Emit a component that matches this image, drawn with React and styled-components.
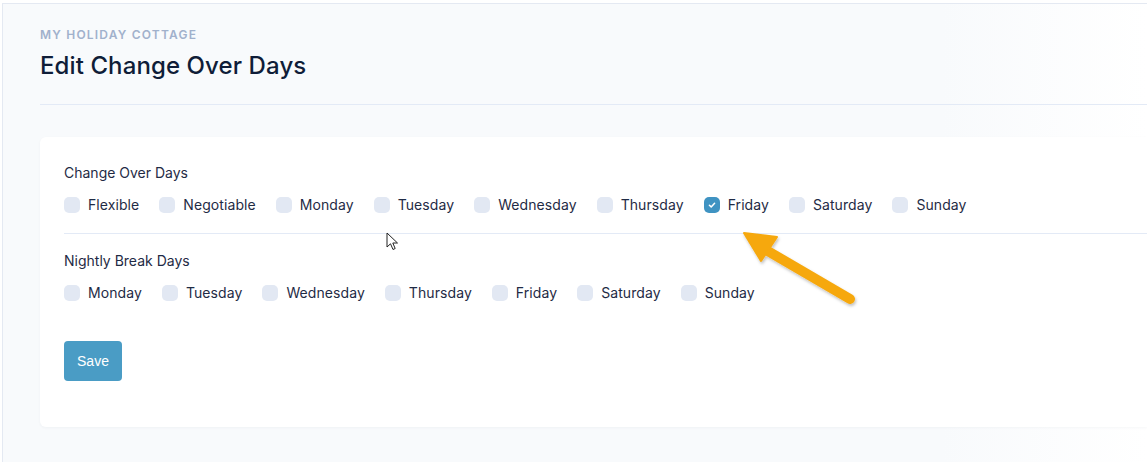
import React, { useState } from 'react';
import styled, { createGlobalStyle } from 'styled-components';

const GlobalStyle = createGlobalStyle`
  body {
    margin: 0;
    background: #fff;
    font-family: Inter, "Noto Sans", sans-serif;
    overflow: hidden;
  }
`;

// outer frame of the page
const Page = styled.div`
  position: relative;
  margin: 3px 0 0 2px;
  height: 459px;
  box-sizing: border-box;
  border-top: 1px solid #e4e9f2;
  border-left: 1px solid #e4e9f2;
  padding: 23px 0 0 37px;
  background: linear-gradient(to right, #f8fafc 0%, #f8fafc 82%, #ffffff 100%);
`;

const Kicker = styled.div`
  font-size: 12px;
  line-height: 16px;
  font-weight: 600;
  letter-spacing: 1.2px;
  color: #a1b1cc;
  text-transform: uppercase;
`;

const Title = styled.h1`
  margin: 8px 0 0;
  font-size: 24px;
  line-height: 30px;
  font-weight: 500;
  letter-spacing: 0.1px;
  color: #0f1d38;
`;

const Rule = styled.div`
  height: 1px;
  background: #e3eaf6;
  margin-top: ${p => p.$top || 0}px;
`;

const Card = styled.div`
  margin-top: 32px;
  background: #fff;
  border-radius: 6px 0 0 6px;
  box-shadow: 0 1px 3px rgba(30, 45, 80, 0.04);
  padding: 26px 0 46px 24px;
`;

const Label = styled.div`
  font-size: 14px;
  line-height: 20px;
  color: #1f2b45;
  margin-top: ${p => p.$top || 0}px;
`;

const Options = styled.div`
  display: flex;
  gap: 20px;
  margin-top: 12px;
`;

const Option = styled.label`
  display: flex;
  align-items: center;
  gap: 8px;
  font-size: 14px;
  line-height: 20px;
  color: #1f2b45;
  letter-spacing: 0.08px;
  cursor: pointer;
`;

const Box = styled.span`
  width: 16px;
  height: 16px;
  border-radius: 5px;
  background: ${p => (p.$on ? '#3f93c2' : '#e2e8f3')};
  display: flex;
  align-items: center;
  justify-content: center;
`;

const SaveButton = styled.button`
  margin-top: 38px;
  width: 58px;
  height: 40px;
  border: none;
  border-radius: 4px;
  background: #4a9cc5;
  color: #fff;
  font-family: "Liberation Sans", Arial, sans-serif;
  font-size: 14px;
  font-weight: 400;
  cursor: pointer;
`;

const Overlay = styled.svg`
  position: absolute;
  pointer-events: none;
`;

const changeDays = ['Flexible', 'Negotiable', 'Monday', 'Tuesday', 'Wednesday', 'Thursday', 'Friday', 'Saturday', 'Sunday'];
const nightDays = ['Monday', 'Tuesday', 'Wednesday', 'Thursday', 'Friday', 'Saturday', 'Sunday'];

function Check({ label, on, onToggle }) {
  return (
    <Option onClick={onToggle}>
      <Box $on={on}>
        {on && (
          <svg width="8" height="8" viewBox="0 0 8 8">
            <path d="M1.4 4.2 L3.2 5.9 L6.6 2.2" fill="none" stroke="#fff" strokeWidth="1.5" strokeLinecap="round" strokeLinejoin="round" />
          </svg>
        )}
      </Box>
      {label}
    </Option>
  );
}

export default function App() {
  const [change, setChange] = useState({ Friday: true });
  const [night, setNight] = useState({});

  return (
    <>
      <GlobalStyle />
      <Page>
        <Kicker>My Holiday Cottage</Kicker>
        <Title>Edit Change Over Days</Title>
        <Rule $top={23} />
        <Card>
          <Label>Change Over Days</Label>
          <Options>
            {changeDays.map(d => (
              <Check key={d} label={d} on={!!change[d]} onToggle={() => setChange({ ...change, [d]: !change[d] })} />
            ))}
          </Options>
          <Rule $top={18} />
          <Label $top={17}>Nightly Break Days</Label>
          <Options>
            {nightDays.map(d => (
              <Check key={d} label={d} on={!!night[d]} onToggle={() => setNight({ ...night, [d]: !night[d] })} />
            ))}
          </Options>
          <SaveButton>Save</SaveButton>
        </Card>

        {/* mouse pointer */}
        <Overlay style={{ left: 383, top: 228 }} width="14" height="20" viewBox="0 0 14 20">
          <path d="M1 1 L1 15 L4.5 11.8 L7 17.5 L9.2 16.5 L6.8 11 L11.5 11 Z" fill="#fff" stroke="#222" strokeWidth="1" strokeLinejoin="round" />
        </Overlay>

        {/* annotation arrow */}
        <Overlay style={{ left: 733, top: 224 }} width="130" height="90" viewBox="0 0 130 90">
          <defs>
            <filter id="sh" x="-20%" y="-20%" width="140%" height="140%">
              <feDropShadow dx="1" dy="2" stdDeviation="1.5" floodColor="#000" floodOpacity="0.25" />
            </filter>
          </defs>
          <g filter="url(#sh)" fill="#f6a80e" stroke="#f6a80e">
            <line x1="114" y1="71" x2="30" y2="22" strokeWidth="10" strokeLinecap="round" />
            <path d="M8 5 L41 9 L25 33 Z" strokeWidth="2" strokeLinejoin="round" />
          </g>
        </Overlay>
      </Page>
    </>
  );
}
